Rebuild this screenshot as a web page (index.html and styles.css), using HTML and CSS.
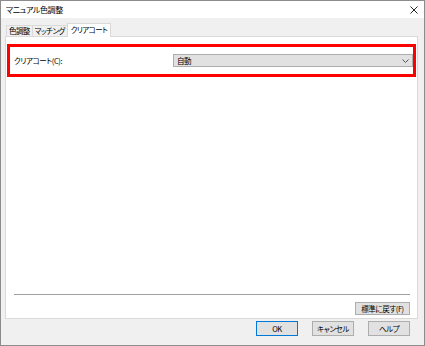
FILE: index.html
```html
<!DOCTYPE html>
<html lang="ja">

<head>
    <meta charset="UTF-8">
    <title>マニュアル色調整</title>
    <link rel="stylesheet" href="styles.css">
</head>

<body>
    <div class="dialog">
        <div class="title-bar">
            <span class="title">マニュアル色調整</span>
            <svg class="close-icon" width="8" height="8" viewBox="0 0 8 8">
                <path d="M0.5 0.5 L7.5 7.5 M7.5 0.5 L0.5 7.5" stroke="#222" stroke-width="1" fill="none"/>
            </svg>
        </div>

        <div class="dialog-body">
            <div class="tabs">
                <div class="tab">色調整</div>
                <div class="tab">マッチング</div>
                <div class="tab active">クリアコート</div>
            </div>

            <div class="tab-panel">
                <div class="highlight">
                    <div class="field-row">
                        <label class="field-label">クリアコート(C):</label>
                        <div class="select">
                            <span>自動</span>
                            <svg width="7" height="4" viewBox="0 0 7 4">
                                <path d="M0.5 0.5 L3.5 3.5 L6.5 0.5" stroke="#555" stroke-width="1" fill="none"/>
                            </svg>
                        </div>
                    </div>
                </div>

                <div class="panel-spacer"></div>

                <div class="panel-footer">
                    <button class="btn btn-reset">標準に戻す(F)</button>
                </div>
            </div>

            <div class="dialog-buttons">
                <button class="btn btn-default">OK</button>
                <button class="btn">キャンセル</button>
                <button class="btn">ヘルプ</button>
            </div>
        </div>
    </div>
</body>

</html>
```

FILE: styles.css
```css
body {
    margin: 0;
    font-family: "Noto Sans CJK JP", "Noto Sans", sans-serif;
    font-size: 7.5px;
    letter-spacing: -0.4px;
    font-feature-settings: "palt";
    color: #000;
}

.dialog {
    width: 425px;
    height: 346px;
    box-sizing: border-box;
    border: 1px solid #8c8c8c;
    display: flex;
    flex-direction: column;
    background-color: #f0f0f0;
}

.title-bar {
    height: 17px;
    background-color: #fff;
    display: flex;
    align-items: center;
    justify-content: space-between;
    padding: 0 5px 0 5px;
    flex-shrink: 0;
}

.title {
    line-height: 1;
    font-size: 8px;
}

.close-icon {
    margin-right: 1px;
}

.dialog-body {
    flex: 1;
    display: flex;
    flex-direction: column;
    padding: 5px 6px 0 4px;
}

.tabs {
    display: flex;
    align-items: flex-end;
    height: 13px;
    padding-left: 1px;
}

.tab {
    height: 10px;
    line-height: 10px;
    padding: 0 2px;
    border: 1px solid #d9d9d9;
    border-bottom: none;
    background-color: #f0f0f0;
    margin-right: -1px;
    white-space: nowrap;
    letter-spacing: -0.6px;
}

.tab.active {
    height: 13px;
    line-height: 12px;
    background-color: #fff;
    position: relative;
    top: 1px;
    padding: 0 3px;
}

.tab-panel {
    height: 283px;
    box-sizing: border-box;
    background-color: #fff;
    border: 1px solid #d9d9d9;
    display: flex;
    flex-direction: column;
    padding: 7px 1px 3px 1px;
}

.highlight {
    border: 3px solid #ff0000;
    padding: 7px 0 7px 4px;
}

.field-row {
    display: flex;
    align-items: center;
    justify-content: space-between;
}

.select {
    width: 232px;
    height: 11px;
    border: 1px solid #adadad;
    background-color: #e1e1e1;
    display: flex;
    align-items: center;
    justify-content: space-between;
    padding: 0 3px 0 3px;
    line-height: 11px;
}

.panel-spacer {
    flex: 1;
}

.panel-footer {
    margin: 0 6px 0 7px;
    border-top: 1px solid #a0a0a0;
    padding-top: 7px;
    display: flex;
    justify-content: flex-end;
}

.btn {
    font-family: "Noto Sans CJK JP", "Noto Sans", sans-serif;
    font-size: 7.5px;
    letter-spacing: -0.4px;
    font-feature-settings: "palt";
    height: 15px;
    width: 42px;
    padding: 0;
    border: 1px solid #adadad;
    background-color: #e1e1e1;
    color: #000;
    line-height: 13px;
    white-space: nowrap;
}

.btn-reset {
    width: 55px;
    height: 13px;
    line-height: 11px;
}

.btn-default {
    border-color: #0078d7;
}

.dialog-buttons {
    display: flex;
    justify-content: flex-end;
    gap: 14px;
    padding: 2px 8px 0 0;
}
```
